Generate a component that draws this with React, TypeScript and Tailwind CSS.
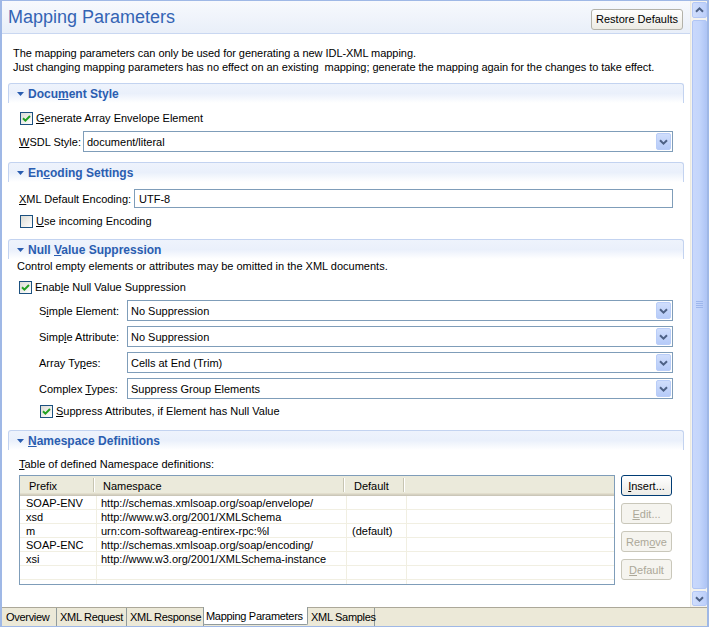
import React from 'react';

const Chevron = ({ up = false }: { up?: boolean }) => (
  <svg width="9" height="6" viewBox="0 0 9 6" className={up ? 'rotate-180' : ''}>
    <path d="M1 1.2 L4.5 4.6 L8 1.2" stroke="#4d6185" strokeWidth="2" fill="none" />
  </svg>
);

const Mn = ({ text, at }: { text: string; at: number }) => (
  <span>
    {text.slice(0, at)}
    <span className="underline underline-offset-[1px]">{text[at]}</span>
    {text.slice(at + 1)}
  </span>
);

const Check = ({ checked }: { checked: boolean }) => (
  <span className="w-[13px] h-[13px] shrink-0 border border-[#1c5180] bg-gradient-to-br from-[#dcdcd5] to-white flex items-center justify-center">
    {checked && (
      <svg width="9" height="9" viewBox="0 0 9 9">
        <path d="M1 4.2 L3.4 6.6 L8 2" stroke="#21a121" strokeWidth="2" fill="none" />
      </svg>
    )}
  </span>
);

const CheckRow = ({ checked, label, className = '' }: { checked: boolean; label: React.ReactNode; className?: string }) => (
  <div className={`h-[14px] flex items-center gap-[3px] ${className}`}>
    <Check checked={checked} />
    <span>{label}</span>
  </div>
);

const Combo = ({ value }: { value: string }) => (
  <div className="flex-1 h-[21px] border border-[#7f9db9] bg-white flex items-center pl-[3px] pr-px">
    <span className="flex-1">{value}</span>
    <span className="w-[15px] h-[17px] rounded-[2px] border border-[#b9cdf8] bg-gradient-to-b from-[#d0defc] to-[#b6cbf8] flex items-center justify-center">
      <Chevron />
    </span>
  </div>
);

const SectionHeader = ({ children, className = '' }: { children: React.ReactNode; className?: string }) => (
  <div className={`mx-[6px] h-[20px] rounded-t-[3px] border-t border-x border-[#c3d3f0] bg-gradient-to-b from-[#eef3fc] via-[#eaf0fb] to-white flex items-center pl-[8px] gap-[4px] ${className}`}>
    <svg width="7" height="4" viewBox="0 0 7 4">
      <path d="M0 0 H7 L3.5 4 Z" fill="#2a5db0" />
    </svg>
    <span className="text-[12px] font-bold text-[#2a5db0]">{children}</span>
  </div>
);

const XpButton = ({ children, disabled = false, focus = false, className = '' }: { children: React.ReactNode; disabled?: boolean; focus?: boolean; className?: string }) => (
  <div
    className={`h-[21px] rounded-[3px] border flex items-center justify-center whitespace-nowrap ${
      disabled
        ? 'border-[#c9c7ba] bg-[#f5f4ef] text-[#aca899]'
        : focus
        ? 'border-[#003c74] bg-gradient-to-b from-white to-[#ecebe6] text-black'
        : 'border-[#b3b2a9] bg-gradient-to-b from-white to-[#ecebe4] text-black'
    } ${className}`}
  >
    {children}
  </div>
);

const rows = [
  ['SOAP-ENV', 'http://schemas.xmlsoap.org/soap/envelope/', ''],
  ['xsd', 'http://www.w3.org/2001/XMLSchema', ''],
  ['m', 'urn:com-softwareag-entirex-rpc:%l', '(default)'],
  ['SOAP-ENC', 'http://schemas.xmlsoap.org/soap/encoding/', ''],
  ['xsi', 'http://www.w3.org/2001/XMLSchema-instance', ''],
  ['', '', ''],
  ['', '', ''],
];

const NamespaceTable = () => (
  <div className="w-[596px] h-[110px] border border-[#7f9db9] bg-white overflow-hidden">
    <div className="h-[20px] flex bg-[#ebeadb] shadow-[inset_0_-1px_0_#cbc7b8,inset_0_-2px_0_#d6d2c2,inset_0_-3px_0_#e2decd]">
      {[['Prefix', 75, 9], ['Namespace', 250, 8], ['Default', 60, 9]].map(([t, w, p]) => (
        <div key={t as string} className="flex items-center" style={{ width: w as number }}>
          <span className="flex-1" style={{ paddingLeft: p as number }}>{t}</span>
          <span className="w-[2px] h-[14px] border-l border-[#c7c5b2] bg-white mb-[2px]" />
        </div>
      ))}
    </div>
    {rows.map((r, i) => (
      <div key={i} className="h-[14px] flex border-b border-[#f1efe2] leading-[13px]">
        <div className="w-[77px] border-r border-[#f1efe2] pl-[6px] pt-px">{r[0]}</div>
        <div className="w-[250px] border-r border-[#f1efe2] pl-[4px] pt-px">{r[1]}</div>
        <div className="w-[60px] border-r border-[#f1efe2] pl-[5px] pt-px">{r[2]}</div>
      </div>
    ))}
  </div>
);

const Scrollbar = () => (
  <div className="w-[17px] bg-[#f4f3ee] border-l border-[#ebe9e0] flex flex-col items-center py-px">
    <div className="w-[15px] h-[16px] rounded-[2px] border border-[#b4c8f6] bg-gradient-to-r from-[#d0defc] to-[#bccffa] flex items-center justify-center">
      <Chevron up />
    </div>
    <div className="w-[15px] flex-1 my-[2px] rounded-[2px] border border-[#b0c5f4] bg-gradient-to-r from-[#c9d8fc] via-[#c3d5fb] to-[#b0c6f6] flex flex-col items-center justify-center gap-[1px]">
      {[0, 1, 2, 3].map((i) => (
        <span key={i} className="w-[7px] h-px bg-[#eef3fe] border-b border-[#9db6ec]" />
      ))}
    </div>
    <div className="w-[15px] h-[15px] rounded-[2px] border border-[#b4c8f6] bg-gradient-to-r from-[#d0defc] to-[#bccffa] flex items-center justify-center">
      <Chevron />
    </div>
  </div>
);

const tabs: [string, number][] = [
  ['Overview', 54],
  ['XML Request', 70],
  ['XML Response', 77],
  ['Mapping Parameters', 105],
  ['XML Samples', 67],
];

export default function App() {
  return (
    <div className="w-[709px] h-[627px] bg-white border-t border-b border-x-2 border-[#9fb8e6] flex flex-col text-[11px] text-black font-['Liberation_Sans',Arial,sans-serif] leading-[14px] overflow-hidden">
      <div className="flex flex-1 min-h-0">
        <div className="flex-1 flex flex-col">
          <div className="h-[33px] shrink-0 border-b border-[#c9d7f1] bg-gradient-to-b from-[#f7f9fd] to-[#e9eff9] flex items-center justify-between pl-[6px] pr-[7px]">
            <span className="text-[18px] text-[#3464b4] leading-[20px]">Mapping Parameters</span>
            <XpButton className="w-[92px] h-[20px] mt-[4px]">Restore Defaults</XpButton>
          </div>

          <div className="mt-[12px] pl-[11px] tracking-[-0.05px]">
            <div>The mapping parameters can only be used for generating a new IDL-XML mapping.</div>
            <div>Just changing mapping parameters has no effect on an existing&nbsp; mapping; generate the mapping again for the changes to take effect.</div>
          </div>

          <SectionHeader className="mt-[9px]"><Mn text="Document Style" at={4} /></SectionHeader>
          <div className="pl-[18px] pr-[17px]">
            <CheckRow className="mt-[8px]" checked label={<Mn text="Generate Array Envelope Element" at={0} />} />
            <div className="mt-[6px] flex items-center">
              <span className="w-[64px] -ml-px"><Mn text="WSDL Style:" at={0} /></span>
              <Combo value="document/literal" />
            </div>
          </div>

          <SectionHeader className="mt-[10px]"><Mn text="Encoding Settings" at={2} /></SectionHeader>
          <div className="pl-[18px] pr-[17px]">
            <div className="mt-[7px] flex items-center">
              <span className="w-[115px] -ml-px whitespace-nowrap"><Mn text="XML Default Encoding:" at={0} /></span>
              <div className="flex-1 h-[19px] border border-[#7f9db9] pl-[4px] flex items-center">UTF-8</div>
            </div>
            <CheckRow className="mt-[6px]" checked={false} label={<Mn text="Use incoming Encoding" at={0} />} />
          </div>

          <SectionHeader className="mt-[11px]"><Mn text="Null Value Suppression" at={5} /></SectionHeader>
          <div className="pl-[15px] pr-[17px]">
            <div className="h-[14px]">Control empty elements or attributes may be omitted in the XML documents.</div>
            <CheckRow className="mt-[7px] ml-[2px]" checked label={<Mn text="Enable Null Value Suppression" at={4} />} />
            <div className="pl-[22px] mt-[6px] flex flex-col gap-[5px]">
              {([
                ['Simple Element:', 1, 'No Suppression'],
                ['Simple Attribute:', 4, 'No Suppression'],
                ['Array Types:', 8, 'Cells at End (Trim)'],
                ['Complex Types:', 8, 'Suppress Group Elements'],
              ] as [string, number, string][]).map(([l, a, v]) => (
                <div key={l} className="flex items-center">
                  <span className="w-[88px]"><Mn text={l} at={a} /></span>
                  <Combo value={v} />
                </div>
              ))}
            </div>
            <CheckRow className="mt-[5px] ml-[23px]" checked label={<Mn text="Suppress Attributes, if Element has Null Value" at={0} />} />
          </div>

          <SectionHeader className="mt-[12px]"><Mn text="Namespace Definitions" at={0} /></SectionHeader>
          <div className="pl-[17px] pr-[17px]">
            <div className="mt-[7px]"><Mn text="Table of defined Namespace definitions:" at={0} /></div>
            <div className="mt-[4px] flex gap-[6px]">
              <NamespaceTable />
              <div className="flex flex-col gap-[7px] w-[51px]">
                <XpButton focus><Mn text="Insert..." at={0} /></XpButton>
                <XpButton disabled><Mn text="Edit..." at={0} /></XpButton>
                <XpButton disabled><Mn text="Remove" at={3} /></XpButton>
                <XpButton disabled><Mn text="Default" at={0} /></XpButton>
              </div>
            </div>
          </div>
        </div>
        <Scrollbar />
      </div>

      <div className="h-[19px] shrink-0 border-t border-[#aca899] bg-[#ece9d8] flex pl-px">
        {tabs.map(([t, w]) => (
          <div
            key={t}
            className={`shrink-0 whitespace-nowrap tracking-[-0.3px] border-r border-[#919b9c] flex items-center ${
              t === 'Mapping Parameters'
                ? 'bg-white border-l -ml-px pl-[2px] -mt-px h-[18px] rounded-b-[2px] border-b border-b-[#919b9c]'
                : 'h-full pl-[3px]'
            }`}
            style={{ width: w }}
          >
            {t}
          </div>
        ))}
      </div>
    </div>
  );
}
